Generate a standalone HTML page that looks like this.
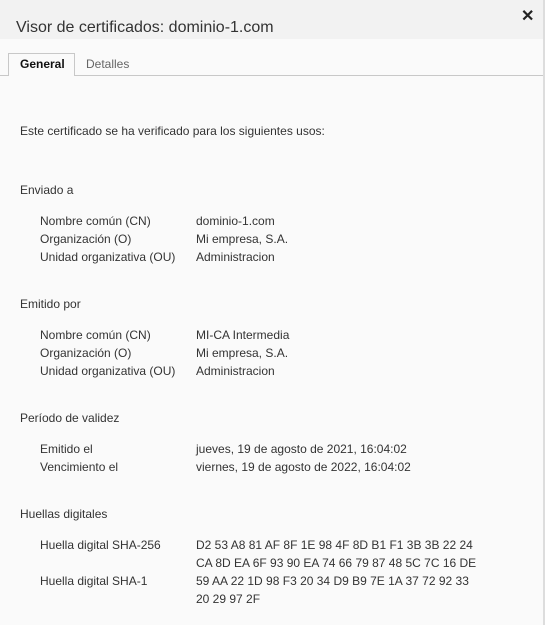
<!DOCTYPE html>
<html><head><meta charset="utf-8"><style>
body{margin:0;width:545px;height:625px;background:#fafafa;font-family:"Liberation Sans",sans-serif;color:#333;overflow:hidden;position:relative}
.hdr{position:absolute;left:0;top:0;width:545px;height:39px;background:#f2f2f2}
.title{position:absolute;left:16px;top:19px;font-size:16px;color:#333}
.x{position:absolute;left:521px;top:6px;font-size:16px;color:#222;font-weight:bold}
.edge{position:absolute;left:543px;top:0;width:2px;height:625px;background:#ddd}
.tabline{position:absolute;left:0;top:75px;width:543px;height:1px;background:#c8c8c8}
.tab{position:absolute;left:8px;top:53px;width:65px;height:22px;border:1px solid #c8c8c8;border-bottom:none;background:#fafafa;z-index:2}
.t{position:absolute;font-size:12px;white-space:nowrap;line-height:14px}
</style></head><body>
<div class="hdr"></div>
<div class="title">Visor de certificados: dominio-1.com</div>
<div class="x">✕</div>
<div class="edge"></div>
<div class="tabline"></div>
<div class="tab"></div>
<div class="t" style="left:20px;top:57px;font-weight:bold;color:#111;z-index:3">General</div>
<div class="t" style="left:86px;top:57px;color:#666">Detalles</div>
<div class="t" style="left:20px;top:124px">Este certificado se ha verificado para los siguientes usos:</div>

<div class="t" style="left:20px;top:183px">Enviado a</div>
<div class="t" style="left:40px;top:214px">Nombre común (CN)</div><div class="t" style="left:196px;top:214px">dominio-1.com</div>
<div class="t" style="left:40px;top:232px">Organización (O)</div><div class="t" style="left:196px;top:232px">Mi empresa, S.A.</div>
<div class="t" style="left:40px;top:250px">Unidad organizativa (OU)</div><div class="t" style="left:196px;top:250px">Administracion</div>

<div class="t" style="left:20px;top:297px">Emitido por</div>
<div class="t" style="left:40px;top:328px">Nombre común (CN)</div><div class="t" style="left:196px;top:328px">MI-CA Intermedia</div>
<div class="t" style="left:40px;top:346px">Organización (O)</div><div class="t" style="left:196px;top:346px">Mi empresa, S.A.</div>
<div class="t" style="left:40px;top:364px">Unidad organizativa (OU)</div><div class="t" style="left:196px;top:364px">Administracion</div>

<div class="t" style="left:20px;top:411px">Período de validez</div>
<div class="t" style="left:40px;top:442px">Emitido el</div><div class="t" style="left:196px;top:442px">jueves, 19 de agosto de 2021, 16:04:02</div>
<div class="t" style="left:40px;top:460px">Vencimiento el</div><div class="t" style="left:196px;top:460px">viernes, 19 de agosto de 2022, 16:04:02</div>

<div class="t" style="left:20px;top:507px">Huellas digitales</div>
<div class="t" style="left:40px;top:538px">Huella digital SHA-256</div><div class="t" style="left:196px;top:538px">D2 53 A8 81 AF 8F 1E 98 4F 8D B1 F1 3B 3B 22 24</div>
<div class="t" style="left:196px;top:556px">CA 8D EA 6F 93 90 EA 74 66 79 87 48 5C 7C 16 DE</div>
<div class="t" style="left:40px;top:574px">Huella digital SHA-1</div><div class="t" style="left:196px;top:574px">59 AA 22 1D 98 F3 20 34 D9 B9 7E 1A 37 72 92 33</div>
<div class="t" style="left:196px;top:592px">20 29 97 2F</div>
</body></html>
